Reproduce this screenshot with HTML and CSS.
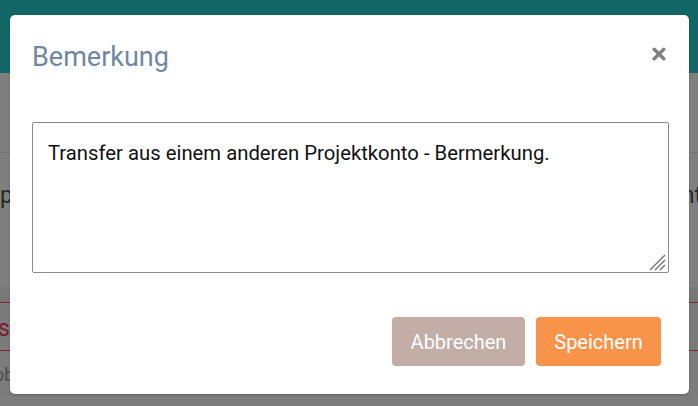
FILE: index.html
```html
<!DOCTYPE html>
<html lang="de">
<head>
<meta charset="utf-8">
<title>Bemerkung</title>
<link rel="stylesheet" href="styles.css">
</head>
<body>
<div class="page">
  <header class="topbar"></header>
  <div class="row row-first"></div>
  <div class="row row-text">
    <span class="bg-text left">p</span>
    <span class="bg-text right">nt</span>
  </div>
  <div class="row row-band"></div>
  <div class="row row-red"><span class="bg-red">s</span></div>
  <div class="row row-last"><span class="bg-muted">ob</span></div>
</div>

<div class="modal" role="dialog" aria-labelledby="modal-title">
  <div class="modal-header">
    <h3 class="modal-title" id="modal-title">Bemerkung</h3>
    <button class="close" type="button" aria-label="Schließen">
      <svg width="14" height="14" viewBox="0 0 14 14" aria-hidden="true">
        <path d="M2.2 2.2 L11.8 11.8 M11.8 2.2 L2.2 11.8" stroke="#808080" stroke-width="3.4" stroke-linecap="round" fill="none"/>
      </svg>
    </button>
  </div>
  <div class="modal-body">
    <div class="field">
      <textarea class="remark">Transfer aus einem anderen Projektkonto - Bermerkung.</textarea>
      <svg class="grip" width="18" height="18" viewBox="0 0 18 18" aria-hidden="true">
        <path d="M2 17 L17 2 M7 17 L17 7 M12 17 L17 12" stroke="#7a7a7a" stroke-width="1.5" fill="none"/>
      </svg>
    </div>
  </div>
  <div class="modal-footer">
    <button class="btn btn-cancel" type="button">Abbrechen</button>
    <button class="btn btn-save" type="button">Speichern</button>
  </div>
</div>
</body>
</html>
```

FILE: styles.css
```css
html, body {
  margin: 0;
  padding: 0;
}

body {
  width: 698px;
  height: 406px;
  overflow: hidden;
  background: #7d7d7d;
  font-family: Roboto, "Liberation Sans", sans-serif;
  position: relative;
}

.page {
  display: flex;
  flex-direction: column;
}

.topbar {
  height: 73px;
  background: #116766;
}

.row {
  display: flex;
  justify-content: space-between;
  background: #7f7f7f;
}

.row-first {
  height: 79px;
  border-bottom: 1px solid #757575;
}

.row-text {
  height: 134px;
  align-items: flex-start;
}

.bg-text {
  font-size: 23px;
  color: #262626;
  line-height: 1;
  margin-top: 31px;
}

.bg-text.left {
  margin-left: 0;
}

.bg-text.right {
  margin-right: -4px;
}

.row-band {
  height: 15px;
  background: #787878;
  border-bottom: 1px solid #7f2433;
}

.row-red {
  height: 47px;
  align-items: center;
  background: #7b7b7b;
  border-bottom: 1px solid #7f2433;
}

.bg-red {
  font-size: 23px;
  color: #7d1a28;
  margin-left: -2px;
  margin-top: 3px;
}

.row-last {
  height: 43px;
  background: #7c7c7c;
  align-items: flex-start;
}

.bg-muted {
  font-size: 18px;
  color: #4a4a4a;
  margin-left: -6px;
  margin-top: 13px;
}

.modal {
  position: absolute;
  left: 10px;
  top: 15px;
  width: 679px;
  height: 379px;
  background: #ffffff;
  border-radius: 5px;
  box-shadow: 0 1px 2px rgba(0, 0, 0, 0.25);
  display: flex;
  flex-direction: column;
}

.modal-header {
  display: flex;
  justify-content: space-between;
  align-items: flex-start;
  padding: 27px 23px 0 22px;
}

.modal-title {
  margin: 0;
  font-size: 27px;
  font-weight: 400;
  line-height: 31px;
  color: #6f87a3;
}

.close {
  border: 0;
  background: transparent;
  padding: 0;
  margin-top: 5px;
  width: 14px;
  height: 14px;
  display: block;
  cursor: pointer;
}

.close svg {
  display: block;
}

.modal-body {
  padding: 49px 21px 0 22px;
}

.field {
  position: relative;
  width: 637px;
  height: 151px;
}

.remark {
  display: block;
  box-sizing: border-box;
  width: 637px;
  height: 151px;
  margin: 0;
  padding: 15px 15px 13px;
  border: 1px solid #8d8a9b;
  border-radius: 2px;
  font-family: Roboto, "Liberation Sans", sans-serif;
  font-size: 20.3px;
  line-height: 30px;
  color: #111111;
  background: #ffffff;
  resize: none;
}

.grip {
  position: absolute;
  right: 3px;
  bottom: 2px;
  display: block;
  pointer-events: none;
}

.modal-footer {
  display: flex;
  justify-content: flex-end;
  gap: 11px;
  padding: 44px 28px 0 0;
}

.btn {
  height: 49px;
  border: 0;
  border-radius: 4px;
  font-family: Roboto, "Liberation Sans", sans-serif;
  font-size: 20px;
  color: #ffffff;
  padding: 0 18px;
  cursor: pointer;
}

.btn-cancel {
  width: 133px;
  background: #c2aea6;
}

.btn-save {
  width: 125px;
  background: #f7944a;
}
```
